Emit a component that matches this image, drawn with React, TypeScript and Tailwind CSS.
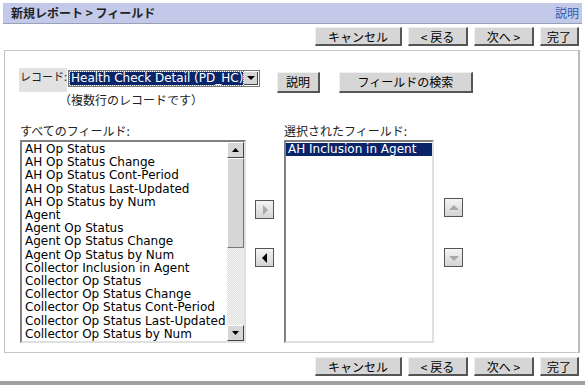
import React from "react";

const allFields = [
  "AH Op Status",
  "AH Op Status Change",
  "AH Op Status Cont-Period",
  "AH Op Status Last-Updated",
  "AH Op Status by Num",
  "Agent",
  "Agent Op Status",
  "Agent Op Status Change",
  "Agent Op Status by Num",
  "Collector Inclusion in Agent",
  "Collector Op Status",
  "Collector Op Status Change",
  "Collector Op Status Cont-Period",
  "Collector Op Status Last-Updated",
  "Collector Op Status by Num",
];

const jp = { fontFamily: '"Noto Sans CJK JP", "DejaVu Sans", sans-serif' };
const latin = { fontFamily: '"DejaVu Sans", "Noto Sans CJK JP", sans-serif' };

function Btn({ label, w }: { label: string; w: string }) {
  return (
    <button
      className={`${w} h-[19px] bg-[#d6d6d6] border-t border-l border-t-[#f0f0f0] border-l-[#f0f0f0] border-r-2 border-b-2 border-r-[#555] border-b-[#555] text-[12px] leading-[15px] text-black`}
      style={jp}
    >
      {label}
    </button>
  );
}

function ButtonRow() {
  return (
    <div className="flex justify-end gap-[6px] pr-[6px]">
      <Btn label="キャンセル" w="w-[87px]" />
      <Btn label="< 戻る" w="w-[60px]" />
      <Btn label="次へ >" w="w-[60px]" />
      <Btn label="完了" w="w-[39px]" />
    </div>
  );
}

function SmallArrow({ dir, active }: { dir: "right" | "left" | "up" | "down"; active: boolean }) {
  const fill = active ? "#000" : "#a8a8a8";
  const pts = {
    right: "7,4 12,9 7,14",
    left: "11,4 6,9 11,14",
    up: "4,11 9,6 14,11",
    down: "4,7 9,12 14,7",
  }[dir];
  return (
    <div className="w-[19px] h-[19px] border border-[#555] bg-gradient-to-b from-[#f4f4f4] to-[#d4d4d4] flex items-center justify-center">
      <svg width="17" height="17" viewBox="0 0 17 17">
        <polygon points={pts} fill={fill} />
      </svg>
    </div>
  );
}

export default function App() {
  return (
    <div className="w-[585px] h-[385px] bg-white relative overflow-hidden">
      <div className="pt-[3px] px-[3px]">
        <div className="h-[21px] bg-[#c3cae9] border-b border-[#9aa0b8] flex items-center justify-between pl-[8px] pr-[3px]">
          <span className="text-[12px] font-bold text-[#222]" style={jp}>
            新規レポート &gt; フィールド
          </span>
          <span className="text-[12px] text-[#2b5bb5]" style={jp}>
            説明
          </span>
        </div>
      </div>

      <div className="mt-[3px]">
        <ButtonRow />
      </div>

      <div className="mt-[4px] ml-[4px] mr-[5px] h-[303px] border border-[#c4c4c4] border-r-2 border-r-[#bbb]">
        <div className="flex items-start pl-[14px] pt-[17px]">
          <div
            className="w-[48px] h-[24px] bg-[#e2e2e2] pl-[1px] pt-[1px] text-[11px] leading-[15px] text-[#222] whitespace-nowrap"
            style={jp}
          >
            レコード:
          </div>
          <div className="ml-[1px] mt-[2px] w-[192px] h-[17px] border border-[#777] bg-white flex items-center p-[1px]">
            <div
              className="flex-1 h-[13px] bg-[#0a246a] text-white text-[12px] leading-[13px] pl-[1px] overflow-hidden whitespace-nowrap outline-1 outline-dotted outline-[#888]"
              style={latin}
            >
              Health Check Detail (PD_HC)
            </div>
            <div className="w-[14px] h-[13px] ml-[1px] bg-[#d6d6d6] border-r border-b border-[#444] flex items-center justify-center">
              <svg width="8" height="5" viewBox="0 0 8 5">
                <polygon points="0,0 8,0 4,4" fill="#000" />
              </svg>
            </div>
          </div>
          <div className="ml-[17px] mt-[1px]">
            <button
              className="w-[43px] h-[21px] bg-[#d6d6d6] border-t border-l border-[#f0f0f0] border-r-2 border-b-2 border-r-[#555] border-b-[#555] text-[12px] text-black"
              style={jp}
            >
              説明
            </button>
          </div>
          <div className="ml-[19px] mt-[1px]">
            <button
              className="w-[134px] h-[21px] bg-[#d6d6d6] border-t border-l border-[#f0f0f0] border-r-2 border-b-2 border-r-[#555] border-b-[#555] text-[12px] text-black"
              style={jp}
            >
              フィールドの検索
            </button>
          </div>
        </div>
        <div className="pl-[54px] text-[12px] leading-[14px] text-[#222]" style={jp}>
          （複数行のレコードです）
        </div>

        <div className="flex pl-[15px] mt-[17px]">
          <div>
            <div className="text-[12px] leading-[14px] text-[#222]" style={jp}>
              すべてのフィールド:
            </div>
            <div className="mt-[2px] w-[226px] h-[203px] border-2 border-t-[#808080] border-l-[#808080] border-r-[#e0e0e0] border-b-[#e0e0e0] flex bg-white">
              <div className="flex-1 pl-[3px] pt-[1px] overflow-hidden">
                {allFields.map((f) => (
                  <div
                    key={f}
                    className="text-[12px] leading-[13.2px] text-black whitespace-nowrap"
                    style={latin}
                  >
                    {f}
                  </div>
                ))}
              </div>
              <div className="w-[17px] flex flex-col bg-[repeating-conic-gradient(#f4f4f4_0_25%,#e0e0e0_0_50%)] bg-[length:2px_2px]">
                <div className="h-[16px] bg-[#d6d6d6] border-t border-l border-[#fff] border-r border-b border-r-[#444] border-b-[#444] flex items-center justify-center">
                  <svg width="7" height="4" viewBox="0 0 7 4">
                    <polygon points="0,4 7,4 3.5,0" fill="#000" />
                  </svg>
                </div>
                <div className="h-[90px] bg-[#d6d6d6] border-t border-l border-[#fff] border-r border-b border-r-[#777] border-b-[#777]" />
                <div className="flex-1" />
                <div className="h-[16px] bg-[#d6d6d6] border-t border-l border-[#fff] border-r border-b border-r-[#444] border-b-[#444] flex items-center justify-center">
                  <svg width="7" height="4" viewBox="0 0 7 4">
                    <polygon points="0,0 7,0 3.5,4" fill="#000" />
                  </svg>
                </div>
              </div>
            </div>
          </div>

          <div className="ml-[9px] pt-[76px] flex flex-col gap-[29px]">
            <SmallArrow dir="right" active={false} />
            <SmallArrow dir="left" active={true} />
          </div>

          <div className="ml-[10px]">
            <div className="text-[12px] leading-[14px] text-[#222]" style={jp}>
              選択されたフィールド:
            </div>
            <div className="mt-[2px] w-[150px] h-[203px] border-2 border-t-[#808080] border-l-[#808080] border-r-[#e0e0e0] border-b-[#e0e0e0] bg-white pt-[1px]">
              <div
                className="bg-[#0a246a] text-white text-[12px] leading-[13px] pl-[2px] whitespace-nowrap"
                style={latin}
              >
                AH Inclusion in Agent
              </div>
            </div>
          </div>

          <div className="ml-[10px] pt-[74px] flex flex-col gap-[31px]">
            <SmallArrow dir="up" active={false} />
            <SmallArrow dir="down" active={false} />
          </div>
        </div>
      </div>

      <div className="mt-[4px]">
        <ButtonRow />
      </div>

      <div className="absolute left-0 right-0 bottom-0 h-[4px] bg-[#a0a0a0]" />
    </div>
  );
}
